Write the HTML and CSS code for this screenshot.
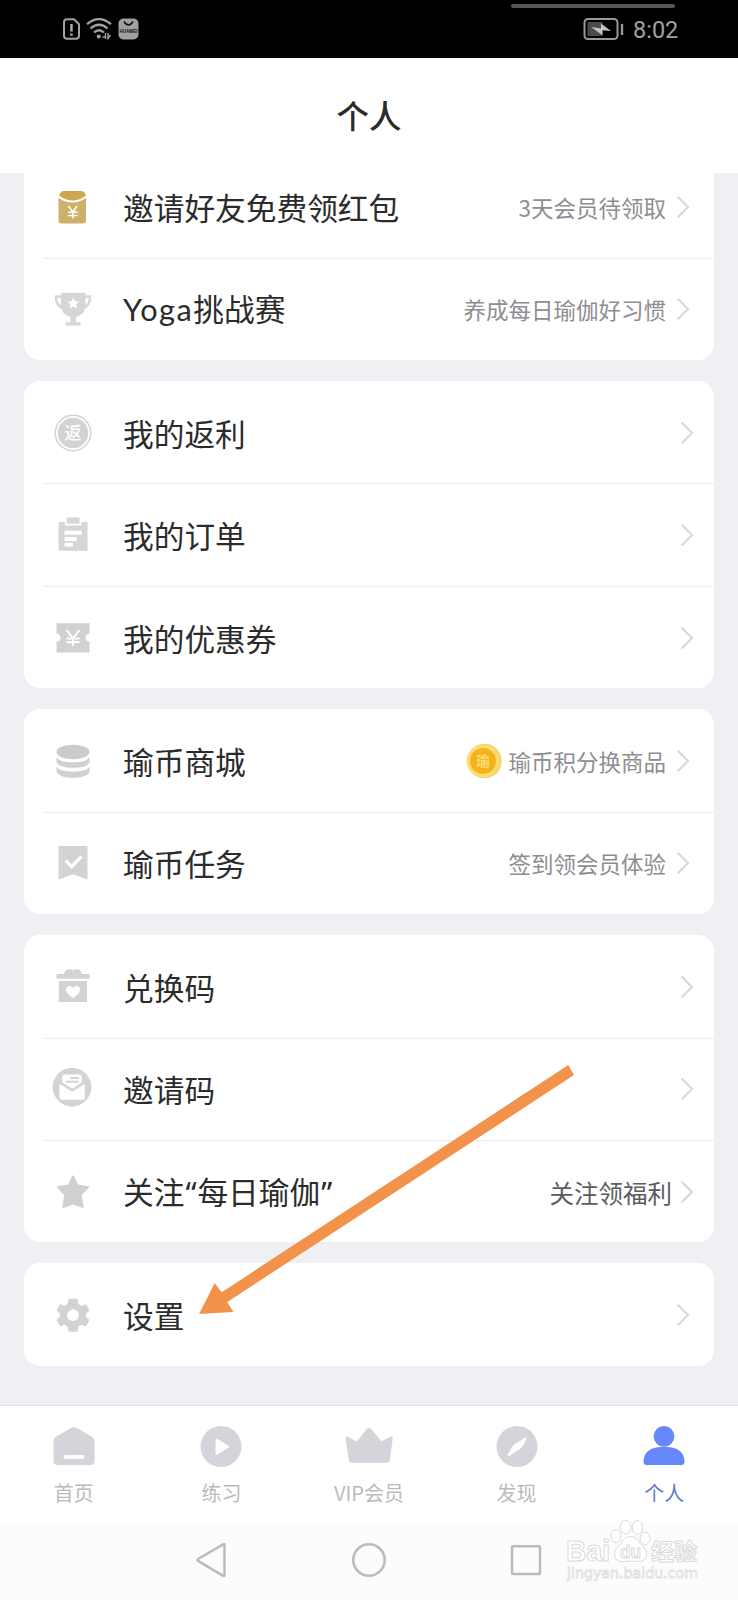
FILE: index.html
```html
<!DOCTYPE html>
<html lang="zh-CN">
<head>
<meta charset="utf-8">
<title>个人</title>
<link rel="stylesheet" href="styles.css">
</head>
<body>
<svg class="defs" width="0" height="0" aria-hidden="true">
  <symbol id="chevron" viewBox="0 0 14 24"><path d="M1.500 1.500 12 12 1.500 22.500" fill="none" stroke="#d6d7d9" stroke-width="2"/></symbol>
</svg>
<div class="screen">
  <header class="status">
    <div class="status-left">
      <svg width="78" height="24" viewBox="0 0 78 24">
        <path d="M12 2.200H5q-3 0-3 3V18.800q0 3 3 3h9q3 0 3-3V7.200Z" fill="none" stroke="#a3a3a3" stroke-width="2"/>
        <path d="M9.500 7v7.500M9.500 16.500v2.200" stroke="#b5b5b5" stroke-width="2.400"/>
        <g fill="none" stroke="#a3a3a3" stroke-width="2.300">
          <path d="M25 7.200Q37-3 49 7.200"/><path d="M28.500 11.500Q37 4 45.500 11.500"/><path d="M32 15.500Q37 11 42 15.500"/>
        </g>
        <circle cx="36.700" cy="19.500" r="2" fill="#a3a3a3"/>
        <path d="M40.500 20h3v-3.500M43.500 16v6M46 16v5.500l2.500-3.500" fill="none" stroke="#a3a3a3" stroke-width="1.400"/>
        <rect x="56.500" y="1.500" width="20" height="21" rx="5" fill="#a0a0a0"/>
        <path d="M62 4.500q4.500 7 9 0" fill="none" stroke="#111" stroke-width="1.500"/>
        <text x="66.500" y="16" class="brand" text-anchor="middle" textLength="18" lengthAdjust="spacingAndGlyphs">HUAWEI</text>
      </svg>
    </div>
    <div class="status-right">
      <span class="pull"></span>
      <svg width="42" height="24" viewBox="0 0 42 24">
        <rect x="1.500" y="2" width="33" height="20" rx="3.500" fill="none" stroke="#999" stroke-width="2"/>
        <rect x="4.500" y="5" width="15" height="14" fill="#4b4b4b"/>
        <path d="m8 10 10 1.500V6.500L28 14l-8.500-.7v5Z" fill="#c4c4c4"/>
        <path d="M39 7v11" stroke="#999" stroke-width="2.400"/>
      </svg>
      <time>8:02</time>
    </div>
  </header>

  <div class="titlebar"><h1>个人</h1></div>

  <main class="list">
    <section class="card card-cut">
      <div class="row">
        <svg class="icon" viewBox="0 0 40 40">
          <path d="M5.500 11q13.700 9 27.500 0v22.500q0 3-3 3H8.500q-3 0-3-3Z" fill="#cfb06b"/>
          <path d="M6 8.500Q7.500 4 11 4H28q3.500 0 5 4.500Q20 18.500 6 8.500Z" fill="#cda650"/>
          <path d="m15.500 19 4.300 6 4.300-6M19.800 25v6.500M15 25.200h9.600M15 28.400h9.600" fill="none" stroke="#fff" stroke-width="1.500"/>
        </svg>
        <span class="label">邀请好友免费领红包</span>
        <span class="note">3天会员待领取</span>
        <svg class="chev"><use href="#chevron"/></svg>
      </div>
      <div class="row">
        <svg class="icon" viewBox="0 0 40 40">
          <path d="M8 3.700H32.500V16q0 9.500-9.500 12v5.300h4.500v3.200h-15v-3.200H17.500V28Q8 25.500 8 16Z" fill="#d6d6d7"/>
          <path d="M8.500 7.500H3q-.5 9.500 7.500 11.500M32 7.500h5q.5 9.500-7.500 11.500" fill="none" stroke="#d6d6d7" stroke-width="2.400"/>
          <path d="m20.200 8.500 1.800 3.700 4.100.5-3 2.800.8 4.100-3.700-2-3.700 2 .8-4.100-3-2.800 4.100-.5Z" fill="#fff"/>
        </svg>
        <span class="label"><span class="latin">Yoga</span>挑战赛</span>
        <span class="note">养成每日瑜伽好习惯</span>
        <svg class="chev"><use href="#chevron"/></svg>
      </div>
    </section>

    <section class="card">
      <div class="row wide">
        <svg class="icon" viewBox="0 0 40 40">
          <circle cx="20" cy="20" r="17.700" fill="none" stroke="#d3d3d4" stroke-width="1.500"/>
          <circle cx="20" cy="20" r="15.200" fill="#d3d3d4"/>
          <text x="20" y="26.300" text-anchor="middle" class="glyph">返</text>
        </svg>
        <span class="label">我的返利</span>
        <svg class="chev"><use href="#chevron"/></svg>
      </div>
      <div class="row wide">
        <svg class="icon" viewBox="0 0 40 40">
          <path d="M5.500 7H12v3.500h16.300V7H34.500V35.700h-29ZM13.800 2.400H26.500V8.800H13.800Z" fill="#d6d6d7"/>
          <path d="M11.500 15.700h17.300v4H11.500ZM11.500 22h12.300v4H11.500ZM11.500 27.800H20v3.800h-8.500Z" fill="#fff"/>
        </svg>
        <span class="label">我的订单</span>
        <svg class="chev"><use href="#chevron"/></svg>
      </div>
      <div class="row wide">
        <svg class="icon" viewBox="0 0 40 40">
          <path d="M3.500 5.300h33v10.500a3.900 3.900 0 0 0 0 7.800v11h-33v-11a3.900 3.900 0 0 0 0-7.800Z" fill="#d1d1d2"/>
          <path d="m13.500 12 6.500 8.300L26.500 12M20 20v8M13.500 20.500h13M13.500 24.200h13" fill="none" stroke="#fff" stroke-width="2"/>
        </svg>
        <span class="label">我的优惠券</span>
        <svg class="chev"><use href="#chevron"/></svg>
      </div>
    </section>

    <section class="card">
      <div class="row">
        <svg class="icon" viewBox="0 0 40 40">
          <ellipse cx="20" cy="11" rx="16.500" ry="7.300" fill="#cbcbcc"/>
          <path d="M3.500 16.200q2 4.800 16.500 5.100 14.500-.3 16.500-5.100v5.200Q34 26.500 20 26.800 6 26.500 3.500 21.400ZM3.500 25.600q2 4.800 16.500 5.100 14.500-.3 16.500-5.100v5.200Q34 36.700 20 37 6 36.700 3.500 30.800Z" fill="#d0d0d1"/>
        </svg>
        <span class="label">瑜币商城</span>
        <svg class="coin" viewBox="0 0 36 36">
          <circle cx="18.500" cy="18" r="17.200" fill="#f3d56a"/>
          <circle cx="17" cy="18" r="16.300" fill="#fbdc73"/>
          <circle cx="17" cy="18" r="13" fill="#f4b21e"/>
          <text x="17" y="23" text-anchor="middle" class="coin-text">瑜</text>
        </svg>
        <span class="note">瑜币积分换商品</span>
        <svg class="chev"><use href="#chevron"/></svg>
      </div>
      <div class="row">
        <svg class="icon" viewBox="0 0 40 40">
          <path d="M5.500 3h29v33.500L20 31.200 5.500 36.500Z" fill="#d3d3d4"/>
          <path d="m12.700 17.500 6 6.200L28.500 13.300" fill="none" stroke="#fff" stroke-width="3.300"/>
        </svg>
        <span class="label">瑜币任务</span>
        <span class="note">签到领会员体验</span>
        <svg class="chev"><use href="#chevron"/></svg>
      </div>
    </section>

    <section class="card">
      <div class="row wide">
        <svg class="icon" viewBox="0 0 40 40">
          <path d="M3.500 7h7.300q1-4.700 5.500-4.700 2 0 3.700 1.200 1.800-1.200 3.800-1.200 4 0 5 4.700h7.700v4.700h-33ZM5.800 14H34v21H5.800Z" fill="#d3d3d4"/>
          <path d="M20 31q-7-4.500-7-8.300 0-3.700 3.400-3.700 2.600 0 3.600 2.300 1-2.300 3.600-2.300 3.400 0 3.400 3.700Q27 26.500 20 31Z" fill="#fff"/>
        </svg>
        <span class="label">兑换码</span>
        <svg class="chev"><use href="#chevron"/></svg>
      </div>
      <div class="row wide">
        <svg class="icon" viewBox="0 0 40 40">
          <circle cx="19" cy="18.200" r="19.300" fill="#d3d3d4"/>
          <path d="M6.500 14.700 19.200 22.700 31.800 14.700V28.700q0 2-2 2H8.500q-2 0-2-2Z" fill="#fff"/>
          <path d="M9.200 7.500q0-2.100 2-2.100H26.800q2 0 2 2.100v6L19.200 19.400 9.200 13.500Z" fill="#fff"/>
          <path d="M17.500 9h8.300M12.500 12.800h13.300" stroke="#d3d3d4" stroke-width="2"/>
        </svg>
        <span class="label">邀请码</span>
        <svg class="chev"><use href="#chevron"/></svg>
      </div>
      <div class="row wide">
        <svg class="icon" viewBox="0 0 40 40">
          <path d="m20 4 4.700 9.300L35.500 15 28 22.600l1.900 12.700L20 31.800l-9.900 3.500L12 22.600 4.500 15l10.800-1.700Z" fill="#d0d0d1" stroke="#d0d0d1" stroke-width="1.500" stroke-linejoin="round"/>
        </svg>
        <span class="label">关注<span class="quote">“</span>每日瑜伽<span class="quote">”</span></span>
        <span class="note note-strong">关注领福利</span>
        <svg class="chev"><use href="#chevron"/></svg>
      </div>
    </section>

    <section class="card">
      <div class="row">
        <svg class="icon" viewBox="0 0 40 40">
          <path d="M15.700 3.700h8.600l1.200 5.300 3 1.700 4.500-1.500 3.500 6.200-3.500 3.300v3l3.500 3.300-3.500 6.200-4.500-1.500-3 1.700-1.200 5.300h-8.600l-1.200-5.300-3-1.700L7 31.200 3.500 25 7 21.700v-3l-3.500-3.300L7 9.200l4.500 1.500 3-1.700ZM20 14.300a5.900 5.900 0 1 0 0 11.800 5.900 5.900 0 1 0 0-11.800Z" fill="#d3d3d4" fill-rule="evenodd"/>
        </svg>
        <span class="label">设置</span>
        <svg class="chev"><use href="#chevron"/></svg>
      </div>
    </section>
  </main>

  <nav class="tabs">
    <a class="tab">
      <svg viewBox="0 0 50 42">
        <path d="M22.500 2.800q2.500-1.500 5 0L43.500 12q2 1.200 2 3.500V36q0 4-4 4h-33q-4 0-4-4V15.500q0-2.300 2-3.500Z" fill="#d4d4da"/>
        <rect x="14.500" y="30" width="21" height="4" rx="2" fill="#fff"/>
      </svg>
      <span>首页</span>
    </a>
    <a class="tab">
      <svg viewBox="0 0 50 42">
        <circle cx="25" cy="21.500" r="20.500" fill="#d4d4da"/>
        <path d="M20.500 14.500v14.300l11.700-7.100Z" fill="#fff" stroke="#fff" stroke-width="2" stroke-linejoin="round"/>
      </svg>
      <span>练习</span>
    </a>
    <a class="tab">
      <svg viewBox="0 0 50 42">
        <path d="M22.500 4.200q2.500-2.400 5 0L37.500 16.500 46 11.800q2.800-1.200 2.700 1.500L46 34.500q-.4 3.200-3.500 3.200H8.200q-3.100 0-3.500-3.200L1.500 13.300q-.1-2.700 2.400-1.500l8.800 4.700Z" fill="#d4d4da"/>
      </svg>
      <span>VIP会员</span>
    </a>
    <a class="tab">
      <svg viewBox="0 0 50 42">
        <circle cx="25" cy="21.500" r="20.500" fill="#d4d4da"/>
        <path d="M33.500 12.200q1.800.3 1 2L31 20.800q-.8 1.300-2.400 2.600L18 30.800q-2.500 1-2.200-1.500l4.800-8q1-1.500 2.400-2.400Z" fill="#fff"/>
      </svg>
      <span>发现</span>
    </a>
    <a class="tab active">
      <svg viewBox="0 0 50 42">
        <circle cx="25" cy="11.300" r="10.400" fill="#6587f8"/>
        <path d="M4.500 36.500Q5 21.700 25 21.700t20.500 14.800q0 3.500-3 3.500h-35q-3 0-3-3.500Z" fill="#6587f8"/>
      </svg>
      <span>个人</span>
    </a>
  </nav>

  <footer class="sysnav">
    <svg viewBox="0 0 36 36"><path d="M30.500 3v30q0 1.500-1.300.8L4.500 19.200q-2-1.200 0-2.400L29.200 2.300q1.300-.7 1.300.7Z" fill="none" stroke="#bbb" stroke-width="2.500"/></svg>
    <svg viewBox="0 0 36 36"><circle cx="18" cy="18" r="15.700" fill="none" stroke="#bbb" stroke-width="2.500"/></svg>
    <svg viewBox="0 0 36 36"><rect x="4" y="4.300" width="28" height="27.800" rx="1" fill="none" stroke="#bbb" stroke-width="2.500"/></svg>
  </footer>

  <!-- pointer over the settings row -->
  <svg class="pointer" viewBox="0 0 376 250"><path d="M0 249 15.700 218 22.700 227.300 369.300 0 375 10 28.300 237 34.300 247Z" fill="#f3924a"/></svg>

  <svg class="mark" viewBox="0 0 140 66">
    <g fill="#fff" stroke="#dadada" stroke-width="1">
      <text x="2" y="42" class="mark-big" textLength="44" lengthAdjust="spacingAndGlyphs">Bai</text>
      <ellipse cx="52" cy="17" rx="5" ry="6.500"/><ellipse cx="61.500" cy="8" rx="5.300" ry="6.800"/><ellipse cx="73.500" cy="8.500" rx="5.300" ry="6.800"/><ellipse cx="81" cy="19.500" rx="5" ry="6.200"/>
      <path d="M66.500 17.500q6 0 10 7.500 7 6 6 11-1.500 7-9 6.500-7-1-14 0-8 .5-9-6.500-.5-5 6-11 4-7.500 10-7.500Z"/>
      <text x="56" y="39" class="mark-du" textLength="21" lengthAdjust="spacingAndGlyphs">du</text>
      <text x="87" y="41" class="mark-cn" textLength="46" lengthAdjust="spacingAndGlyphs">经验</text>
    </g>
    <text x="3" y="59" class="mark-url" textLength="131" lengthAdjust="spacingAndGlyphs">jingyan.baidu.com</text>
  </svg>
</div>
</body>
</html>
```
FILE: styles.css
```css
* { box-sizing: border-box; }
body {
  margin: 0;
  background: #eff0f4;
  font-family: "Noto Sans CJK SC", sans-serif;
  color: #2b2b2b;
}
.defs { position: absolute; }
.screen {
  position: relative;
  width: 738px;
  height: 1600px;
  overflow: hidden;
  display: flex;
  flex-direction: column;
}
.status {
  flex: none;
  height: 58px;
  background: #000;
  display: flex;
  justify-content: space-between;
  padding: 0 60px 0 62px;
}
.status-left { padding-top: 17px; }
.status-left svg { display: block; }
.brand { font: 700 5.500px "Liberation Sans", sans-serif; fill: #111; }
.status-right {
  position: relative;
  display: flex;
  align-items: flex-start;
  gap: 8px;
  padding-top: 17px;
}
.status-right time {
  font: 23.500px/26px Roboto, sans-serif;
  color: #a0a0a0;
  width: 45px;
}
.pull {
  position: absolute;
  top: 4px;
  right: 3px;
  width: 164px;
  height: 4px;
  border-radius: 2px;
  background: #555;
}
.titlebar {
  flex: none;
  height: 115px;
  background: #fff;
  display: flex;
  align-items: center;
  justify-content: center;
  padding-bottom: 2px;
  position: relative;
  z-index: 1;
}
.titlebar h1 { margin: 0; font-size: 32.500px; font-weight: 500; line-height: 48px; }
.list {
  flex: none;
  height: 1232px;
  padding: 0 24px;
  display: flex;
  flex-direction: column;
  gap: 21.100px;
}
.card {
  flex: none;
  background: #fff;
  border-radius: 16px;
}
.card-cut { margin-top: -17.800px; }
.row {
  position: relative;
  height: 102.400px;
  display: flex;
  align-items: center;
  padding: 1px 24px 0 29px;
}
.row.wide { padding-right: 20px; }
.row + .row::before {
  content: "";
  position: absolute;
  left: 20px;
  right: 0;
  top: 0;
  height: 1px;
  background: #ebecee;
}
.icon { width: 40px; height: 40px; flex: none; overflow: visible; }
.label {
  flex: 1;
  margin-left: 30px;
  font-size: 30.700px;
  line-height: 40px;
  white-space: nowrap;
}
.latin { font-family: Lato, sans-serif; letter-spacing: 1.500px; }
.quote { font-family: "Noto Sans", sans-serif; letter-spacing: 1px; margin-left: 1px; }
.note { font-size: 22.500px; line-height: 32px; color: #8d8e92; white-space: nowrap; }
.note-strong { font-size: 24.500px; color: #5c5d60; padding-top: 2px; }
.chev { width: 14px; height: 24px; flex: none; margin-left: 10px; }
.note-strong + .chev { margin-left: 8px; }
.coin { width: 36px; height: 36px; flex: none; margin-right: 6px; }
.glyph { font-size: 17px; font-weight: 500; fill: #fff; }
.coin-text { font-size: 13.500px; font-weight: 700; fill: #fbdc73; }
.tabs {
  flex: none;
  height: 117px;
  background: #fff;
  border-top: 1px solid #dedfe1;
  display: grid;
  grid-template-columns: repeat(5, 1fr);
}
.tab {
  display: flex;
  flex-direction: column;
  align-items: center;
  padding-top: 19px;
  font-size: 20px;
  line-height: 28px;
  color: #bbb;
}
.tab svg { width: 50px; height: 42px; margin-bottom: 12px; }
.tab.active { color: #5b7bd0; }
.sysnav {
  flex: none;
  height: 78px;
  background: #fcfcfc;
  display: flex;
  justify-content: center;
  gap: 121px;
  padding-top: 20px;
}
.sysnav svg { width: 36px; height: 36px; }
.pointer { position: absolute; left: 199px; top: 1065px; width: 376px; height: 250px; }
.mark { position: absolute; left: 564px; top: 1519px; width: 140px; height: 66px; }
.mark-big { font: 700 30px "Liberation Sans", sans-serif; }
.mark-du { font: 700 18px "Liberation Sans", sans-serif; }
.mark-cn { font: 700 23px "Noto Sans CJK SC", sans-serif; }
.mark-url { font: 14px "DejaVu Sans", sans-serif; fill: #fff; stroke: #dedede; stroke-width: 0.8px; }
```
